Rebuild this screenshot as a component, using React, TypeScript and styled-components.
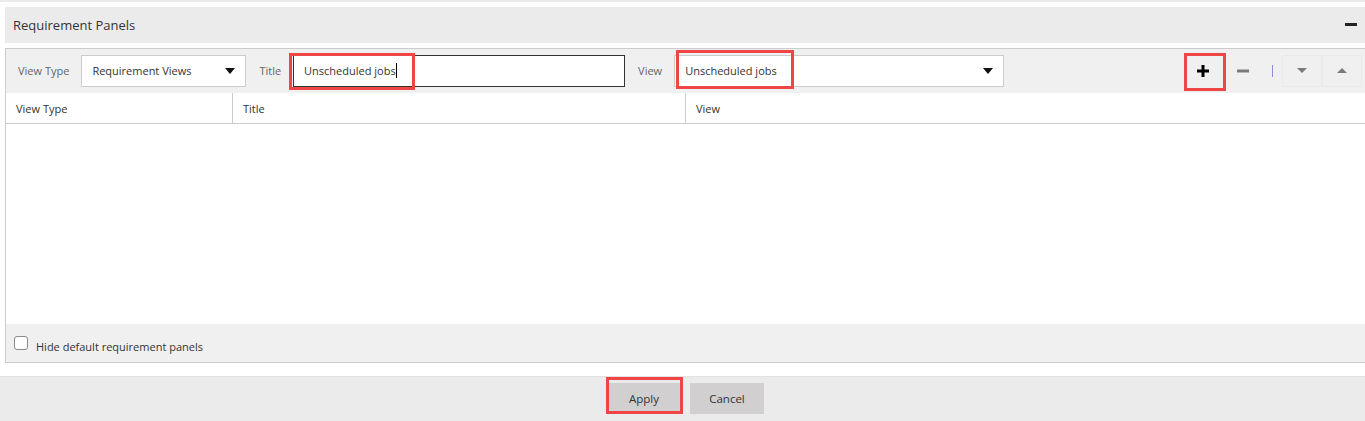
import React from 'react';
import styled, { createGlobalStyle } from 'styled-components';

const GlobalStyle = createGlobalStyle`
  html, body {
    margin: 0;
    padding: 0;
    background: #fff;
    overflow: hidden;
  }
  body {
    font-family: "Open Sans", "Noto Sans", sans-serif;
    color: #333;
  }
`;

const Page = styled.div`
  width: 1365px;
  height: 421px;
  display: flex;
  flex-direction: column;
`;

const TopStrip = styled.div`
  height: 2px;
  background: #ebebeb;
`;

const Section = styled.div`
  padding: 5px 0 0 5px;
  display: flex;
  flex-direction: column;
  gap: 5px;
`;

const SectionHeader = styled.div`
  height: 36px;
  background: #ebebeb;
  display: flex;
  align-items: center;
  justify-content: space-between;
  padding: 0 8px;
  font-size: 13px;
  color: #333;
`;

const CollapseBar = styled.span`
  display: block;
  width: 12px;
  height: 3px;
  background: #222;
`;

const Panel = styled.div`
  border: 1px solid #ccc;
  border-right: none;
  display: flex;
  flex-direction: column;
`;

const Toolbar = styled.div`
  height: 44px;
  background: #f0f0f0;
  display: flex;
  align-items: center;
  padding-left: 12px;
`;

const FieldLabel = styled.span<{ $gap?: number }>`
  font-size: 11px;
  color: #666;
  margin-left: ${(p) => p.$gap ?? 0}px;
  margin-right: 12px;
`;

const Field = styled.div`
  position: relative;
`;

const SelectBox = styled.div<{ $width: number }>`
  width: ${(p) => p.$width}px;
  height: 32px;
  box-sizing: border-box;
  background: #fff;
  border: 1px solid #ccc;
  display: flex;
  align-items: center;
  justify-content: space-between;
  padding: 0 10px;
  font-size: 11px;
  color: #333;
`;

const TextBox = styled.div<{ $width: number }>`
  width: ${(p) => p.$width}px;
  height: 32px;
  box-sizing: border-box;
  background: #fff;
  border: 1px solid #333;
  display: flex;
  align-items: center;
  padding: 0 10px;
  font-size: 11px;
  color: #333;
`;

const Caret = styled.span`
  display: inline-block;
  width: 1px;
  height: 15px;
  background: #000;
`;

const Highlight = styled.div<{ $l: number; $t: number; $w: number; $h: number }>`
  position: absolute;
  left: ${(p) => p.$l}px;
  top: ${(p) => p.$t}px;
  width: ${(p) => p.$w}px;
  height: ${(p) => p.$h}px;
  box-sizing: border-box;
  border: 3px solid #f04545;
  pointer-events: none;
`;

const Tools = styled.div`
  margin-left: auto;
  display: flex;
  align-items: center;
  margin-right: 3px;
`;

const ToolButton = styled.div<{ $framed?: boolean }>`
  position: relative;
  width: 40px;
  height: 32px;
  box-sizing: border-box;
  display: flex;
  align-items: center;
  justify-content: center;
  border: 1px solid ${(p) => (p.$framed ? '#eaeaea' : 'transparent')};
`;

const Separator = styled.span`
  width: 1px;
  height: 12px;
  background: #8c8ce0;
  margin: 0 9px 0 9px;
`;

const GridHeader = styled.div`
  display: grid;
  grid-template-columns: 226px 453px 1fr;
  height: 30px;
  border-bottom: 1px solid #ccc;
  background: #fff;
`;

const HeaderCell = styled.div<{ $divider?: boolean }>`
  display: flex;
  align-items: center;
  padding: 2px 0 0 10px;
  font-size: 11px;
  color: #333;
  border-left: ${(p) => (p.$divider ? '1px solid #ccc' : 'none')};
`;

const GridBody = styled.div`
  height: 200px;
  background: #fff;
`;

const PanelFooter = styled.div`
  height: 38px;
  background: #f0f0f0;
  display: flex;
  align-items: center;
  padding-left: 8px;
  gap: 8px;
  font-size: 11px;
  color: #333;
`;

const CheckBox = styled.span`
  width: 14px;
  height: 14px;
  box-sizing: border-box;
  border: 1px solid #8a8a8a;
  border-radius: 3px;
  background: #fff;
`;

const CheckLabel = styled.span`
  margin-top: 8px;
`;

const ActionBar = styled.div`
  margin-top: 13px;
  height: 45px;
  background: #ebebeb;
  border-top: 1px solid #e2e2e2;
  display: flex;
  justify-content: center;
  align-items: flex-start;
  padding: 6px 0 0 6px;
  gap: 9px;
`;

const ActionButton = styled.div`
  position: relative;
  width: 74px;
  height: 31px;
  background: #d1cfcf;
  display: flex;
  align-items: center;
  justify-content: center;
  font-size: 11.5px;
  color: #333;
`;

const DropCaret = () => (
  <svg width="10" height="6" viewBox="0 0 10 6">
    <path d="M0 0 L10 0 L5 6 Z" fill="#111" />
  </svg>
);

const PlusIcon = () => (
  <svg width="12" height="12" viewBox="0 0 12 12">
    <path d="M6 0 V12 M0 6 H12" stroke="#000" strokeWidth="3" />
  </svg>
);

const MinusIcon = () => (
  <svg width="12" height="4" viewBox="0 0 12 4">
    <rect x="0" y="0.5" width="12" height="3" fill="#7a7a7a" />
  </svg>
);

const ArrowIcon = ({ up }: { up?: boolean }) => (
  <svg width="10" height="5" viewBox="0 0 10 5">
    <path d={up ? 'M0 5 L10 5 L5 0 Z' : 'M0 0 L10 0 L5 5 Z'} fill="#7a7a7a" />
  </svg>
);

export default function App() {
  return (
    <Page>
      <GlobalStyle />
      <TopStrip />
      <Section>
        <SectionHeader>
          <span>Requirement Panels</span>
          <CollapseBar />
        </SectionHeader>
        <Panel>
          <Toolbar>
            <FieldLabel>View Type</FieldLabel>
            <SelectBox $width={165}>
              <span>Requirement Views</span>
              <DropCaret />
            </SelectBox>
            <FieldLabel $gap={13}>Title</FieldLabel>
            <Field>
              <TextBox $width={332}>
                Unscheduled jobs<Caret />
              </TextBox>
              <Highlight $l={-4} $t={-2} $w={126} $h={37} />
            </Field>
            <FieldLabel $gap={13}>View</FieldLabel>
            <Field>
              <SelectBox $width={330}>
                <span>Unscheduled jobs</span>
                <DropCaret />
              </SelectBox>
              <Highlight $l={2} $t={-5} $w={118} $h={39} />
            </Field>
            <Tools>
              <ToolButton>
                <PlusIcon />
                <Highlight $l={0} $t={-3} $w={42} $h={38} />
              </ToolButton>
              <ToolButton>
                <MinusIcon />
              </ToolButton>
              <Separator />
              <ToolButton $framed>
                <ArrowIcon />
              </ToolButton>
              <ToolButton $framed>
                <ArrowIcon up />
              </ToolButton>
            </Tools>
          </Toolbar>
          <GridHeader>
            <HeaderCell>View Type</HeaderCell>
            <HeaderCell $divider>Title</HeaderCell>
            <HeaderCell $divider>View</HeaderCell>
          </GridHeader>
          <GridBody />
          <PanelFooter>
            <CheckBox />
            <CheckLabel>Hide default requirement panels</CheckLabel>
          </PanelFooter>
        </Panel>
      </Section>
      <ActionBar>
        <ActionButton>
          Apply
          <Highlight $l={-1} $t={-6} $w={77} $h={37} />
        </ActionButton>
        <ActionButton>Cancel</ActionButton>
      </ActionBar>
    </Page>
  );
}
